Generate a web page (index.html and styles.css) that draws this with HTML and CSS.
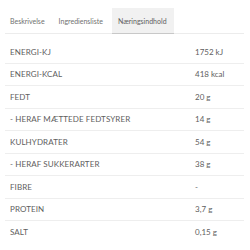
FILE: index.html
```html
<!DOCTYPE html>
<html>
<head>
<meta charset="utf-8">
<link rel="stylesheet" href="styles.css">
</head>
<body>
<div class="wrap">
  <div class="tabs">
    <div class="tab">Beskrivelse</div>
    <div class="tab">Ingrediensliste</div>
    <div class="tab active">Næringsindhold</div>
  </div>
  <div class="table">
    <div class="row"><span class="label">ENERGI-KJ</span><span class="val">1752 kJ</span></div>
    <div class="row"><span class="label">ENERGI-KCAL</span><span class="val">418 kcal</span></div>
    <div class="row"><span class="label">FEDT</span><span class="val">20 g</span></div>
    <div class="row"><span class="label">- HERAF MÆTTEDE FEDTSYRER</span><span class="val">14 g</span></div>
    <div class="row"><span class="label">KULHYDRATER</span><span class="val">54 g</span></div>
    <div class="row"><span class="label">- HERAF SUKKERARTER</span><span class="val">38 g</span></div>
    <div class="row"><span class="label">FIBRE</span><span class="val">-</span></div>
    <div class="row"><span class="label">PROTEIN</span><span class="val">3,7 g</span></div>
    <div class="row last"><span class="label">SALT</span><span class="val">0,15 g</span></div>
  </div>
</div>
</body>
</html>
```
FILE: styles.css
```css
html, body { margin: 0; padding: 0; background: #fff; }
body { font-family: Lato, "Open Sans", sans-serif; color: #606060; }
.wrap { padding: 8px 6px 0 5px; }
.tabs {
  display: flex;
  border-bottom: 1px solid #ececec;
}
.tab {
  font-size: 7px;
  color: #707070;
  height: 25px;
  line-height: 26px;
  padding: 0 5px;
  margin-right: 4px;
}
.tab.active {
  background: #f1f1f1;
  border-bottom: 1px solid #c8c8c8;
  margin-bottom: -1px;
  padding: 0 7px 0 6px;
  color: #606060;
}
.table { margin-top: 7px; }
.row {
  display: flex;
  align-items: center;
  height: 22.5px;
  border-bottom: 1px solid #eeeeee;
  box-sizing: border-box;
  font-size: 8px;
  padding-left: 5px;
}
.row.last { border-bottom: none; }
.label { flex: 1; letter-spacing: 0.1px; }
.val { width: 49px; }
```
